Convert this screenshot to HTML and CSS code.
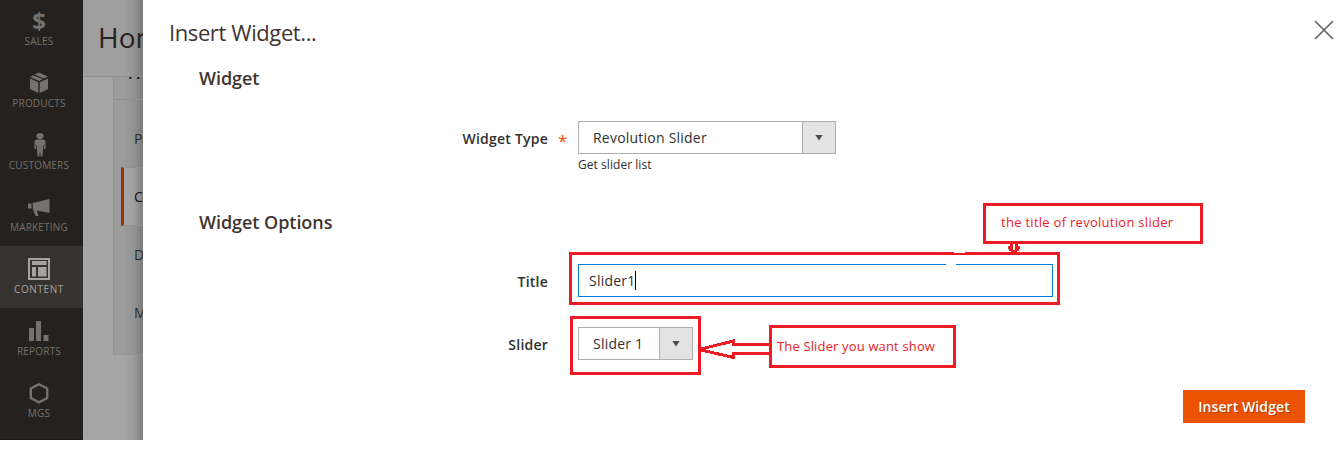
FILE: index.html
```html
<!DOCTYPE html>
<html lang="en">
<head>
<meta charset="utf-8">
<title>Insert Widget</title>
<link rel="stylesheet" href="styles.css">
</head>
<body>
<div class="app">
  <nav class="menu">
    <a class="menu-item"><span class="menu-icon dollar">$</span><span class="menu-label">SALES</span></a>
    <a class="menu-item"><svg class="menu-icon" viewBox="0 0 24 24"><path d="M12 1.500 7.500 3.500l9.300 4 4-2zM6.300 4.200 3 6l9 4 3.700-2zM3 7.500l8.300 3.700V22L3 18zM21 7.500l-8.300 3.700V22L21 18z"/></svg><span class="menu-label">PRODUCTS</span></a>
    <a class="menu-item"><svg class="menu-icon" viewBox="0 0 24 24"><ellipse cx="13" cy="3" rx="3.600" ry="3"/><path d="M10 6.500h6q2.500 0 2.500 3V16H17v-4h-.6l-1 11.500h-1.700l-.7-6-.7 6h-1.700L9.600 12H9v4H7.500V9.500q0-3 2.500-3z"/></svg><span class="menu-label">CUSTOMERS</span></a>
    <a class="menu-item"><svg class="menu-icon" viewBox="0 0 24 24"><path d="M1 8.500h3.500v5H1zM5.500 8 22.500 4v14L10 15.500l1.500 5.500H8.500L6 14.500z"/></svg><span class="menu-label">MARKETING</span></a>
    <a class="menu-item active"><svg class="menu-icon" viewBox="0 0 24 24"><path fill-rule="evenodd" d="M1 1h22v22H1zM3 3v18h18V3zM5 4h14.500v4H5zM5 10h4v9.500H5zM11 10h8.500v9.500H11z"/></svg><span class="menu-label wider">CONTENT</span></a>
    <a class="menu-item"><svg class="menu-icon" viewBox="0 0 24 24"><path d="M2 9h5v13H2zM9 2h5v20H9zM16.500 16h5v6h-5z"/></svg><span class="menu-label">REPORTS</span></a>
    <a class="menu-item"><svg class="menu-icon" viewBox="0 0 24 24"><path class="hex" d="M12 3.200 20.200 7.500v9.500L12 21.300 3.800 17V7.500z"/></svg><span class="menu-label">MGS</span></a>
  </nav>

  <div class="page">
    <header class="page-head">Home</header>
    <div class="tabs">
      <div class="tabs-head"><span>PAGE</span></div>
      <div class="tab">Page</div>
      <div class="tab current">Content</div>
      <div class="tab">Design</div>
      <div class="tab">Meta</div>
    </div>
  </div>

  <main class="modal">
    <header class="modal-head">
      <h1>Insert Widget...</h1>
      <svg class="close" viewBox="0 0 20 20"><path d="M1 1 19 19M19 1 1 19"/></svg>
    </header>
    <h2>Widget</h2>
    <div class="field">
      <label>Widget Type<span class="required">*</span></label>
      <div class="select wide"><span class="value">Revolution Slider</span><span class="toggle"><i></i></span></div>
    </div>
    <p class="note">Get slider list</p>
    <h2 class="options">Widget Options</h2>
    <div class="field">
      <label>Title</label>
      <div class="input"><span>Slider1</span><i class="caret"></i></div>
    </div>
    <div class="field slider-field">
      <label>Slider</label>
      <div class="select small"><span class="value">Slider 1</span><span class="toggle"><i></i></span></div>
    </div>
    <footer><button>Insert Widget</button></footer>
  </main>
</div>

<svg class="marks" viewBox="0 0 1343 449" shape-rendering="crispEdges">
  <path class="erase" d="M946 263h10v3h-10z"/>
  <path d="M570.500 253.500h488v50h-488zM571.500 317.500h128v56h-128zM984.500 204.500h217v38h-217zM770.500 326.500h184v40h-184z"/>
  <path class="erase" d="M954 251h11v2h-11z"/>
  <path d="M769 344.500H733.500V341L699 349.500 733.500 357.500V353.500H769"/>
  <path class="solid" d="M1010 244h3v6h2v-6h3v2h2v3h-1v2h-2v2h-6v-2h-2v-2h-1v-3h2z"/>
</svg>
<div class="callout title-callout">the title of revolution slider</div>
<div class="callout slider-callout">The Slider you want show</div>
</body>
</html>
```

FILE: styles.css
```css
* { box-sizing: border-box; }
body { margin: 0; width: 1343px; height: 449px; overflow: hidden; position: relative; background: #fff; color: #41362f; font-family: "Open Sans", "Noto Sans", sans-serif; }
.app { display: flex; height: 440px; }
span { white-space: nowrap; }

.menu { width: 83px; height: 440px; background: #25211e; overflow: hidden; border-bottom: 1px solid #211719; }
.menu-item { display: flex; flex-direction: column; align-items: center; height: 62px; padding-top: 11px; padding-right: 5px; color: #75716c; }
.menu-item:first-child { height: 60px; padding-top: 9px; }
.menu-item.active { background: #36322f; color: #a6a29c; }
.menu-icon { display: block; width: 24px; height: 24px; fill: currentColor; }
.menu-icon.dollar { font: bold 24px/24px "Open Sans", sans-serif; text-align: center; }
.hex { fill: none; stroke: currentColor; stroke-width: 2.4; }
.menu-label { font-size: 10px; line-height: 14px; margin-top: 1px; letter-spacing: .2px; }
.menu-label.wider { letter-spacing: .6px; }

.page { width: 60px; height: 440px; overflow: hidden; background: linear-gradient(90deg, transparent 40px, rgba(0,0,0,.06) 50px, rgba(0,0,0,.24) 60px), #a6a6a6; }
.page-head { height: 77px; padding-left: 15px; border-bottom: 1px solid #8f8f8f; background: linear-gradient(90deg, transparent 40px, rgba(0,0,0,.06) 50px, rgba(0,0,0,.24) 60px), #9f9f9f; color: #29221f; font-size: 28px; line-height: 74px; }
.tabs { margin-left: 30px; width: 60px; height: 278px; border: solid #919191; border-width: 0 0 1px 1px; background: linear-gradient(90deg, transparent 10px, rgba(0,0,0,.06) 20px, rgba(0,0,0,.24) 30px), #9c9c9c; }
.tabs-head { height: 23px; border-bottom: 1px solid #909090; overflow: hidden; padding-left: 14px; color: #29221f; }
.tabs-head span { display: block; font-size: 14px; font-weight: 700; line-height: 18px; margin-top: -12px; }
.tab { height: 58px; margin-left: 7px; padding-left: 13px; padding-top: 19px; font-size: 14px; line-height: 20px; letter-spacing: -.5px; color: #292929; }
.tabs-head + .tab { height: 67px; padding-top: 29px; }
.tab.current { height: 59px; padding: 19px 0 0 10px; border-left: 3px solid #9d3500; border-top: 1px solid #909090; border-bottom: 1px solid #909090; color: #111; background: linear-gradient(90deg, #a6a6a6 2px, #9e9e9e 10px, #7f7f7f 19px); }

.modal { flex: 1; height: 440px; background: #fff; display: flex; flex-direction: column; }
.modal-head { display: flex; justify-content: space-between; height: 66px; padding: 17px 9px 0 26px; }
h1 { margin: 0; font-size: 22px; font-weight: 400; line-height: 30px; letter-spacing: -.4px; }
.close { width: 20px; height: 20px; margin-top: 3px; stroke: #696361; stroke-width: 1.700; }
h2 { margin: 0 0 0 56px; height: 55px; font-size: 18px; font-weight: 600; line-height: 24px; letter-spacing: -.05px; }
.field { display: flex; height: 33px; color: #303030; font-size: 14px; letter-spacing: .22px; }
label { width: 405px; margin-right: 30px; font-weight: 600; line-height: 33px; text-align: right; position: relative; padding-top: 1px; }
.required { position: absolute; left: 415px; top: 3px; color: #eb5202; font-size: 17px; font-weight: 400; }
.select { display: flex; height: 33px; border: 1px solid #adadad; }
.wide { width: 258px; }
.small { width: 115px; }
.value { flex: 1; padding-left: 14px; line-height: 31px; }
.toggle { width: 33px; background: #e3e3e3; border-left: 1px solid #adadad; display: flex; align-items: center; justify-content: center; }
.toggle i { width: 8px; height: 6px; background: #514943; clip-path: polygon(0 0, 100% 0, 50% 100%); }
.note { margin: 0 0 0 435px; padding-top: 2px; height: 56px; font-size: 12px; line-height: 17px; letter-spacing: .05px; color: #303030; }
h2.options { height: 54px; }
.input { display: flex; align-items: center; width: 475px; height: 33px; padding-left: 10px; border: 1px solid #007bdb; }
.caret { width: 1px; height: 19px; background: #000; }
.slider-field { margin-top: 30px; }
footer { display: flex; justify-content: flex-end; padding: 30px 38px 0 0; }
button { width: 122px; height: 33px; padding: 0; border: 0; background: #eb5202; color: #fff; font: 600 14px/33px "Open Sans", sans-serif; letter-spacing: .08px; text-shadow: 1px 1px 0 rgba(0,0,0,.25); }

/* Annotations drawn over the dialog */
.marks { position: absolute; left: 0; top: 0; width: 1343px; height: 449px; fill: none; stroke: #ed1c24; stroke-width: 3; }
.marks .erase { fill: #fff; stroke: none; }
.marks .solid { fill: #ed1c24; stroke: none; }
.callout { position: absolute; font-size: 13px; line-height: 20px; color: #ed1c24; white-space: nowrap; }
.title-callout { left: 1001px; top: 212px; letter-spacing: .28px; }
.slider-callout { left: 777px; top: 336px; letter-spacing: .15px; }
```
